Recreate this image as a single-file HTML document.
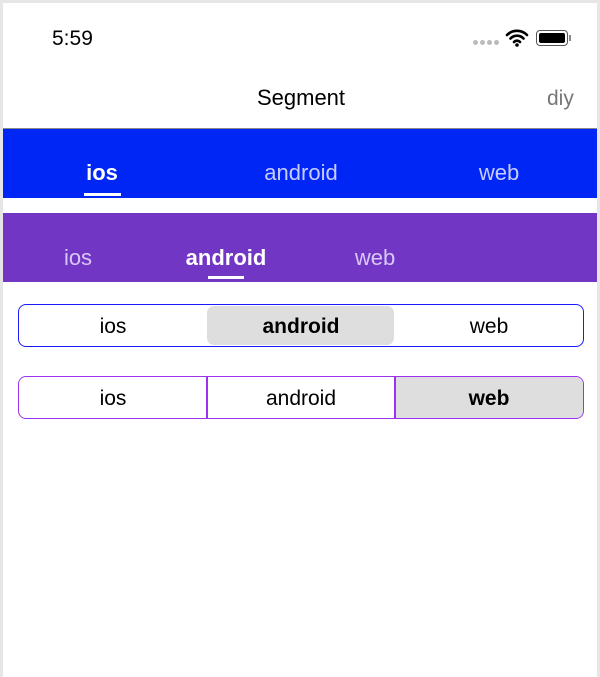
<!DOCTYPE html>
<html><head><style>
*{margin:0;padding:0;box-sizing:border-box}
body{width:600px;height:677px;background:#e6e6e6;font-family:"Liberation Sans",sans-serif;position:relative;overflow:hidden}
.page{position:absolute;left:3px;top:3px;width:594px;height:674px;background:#fff}
.abs{position:absolute}
.t{position:absolute;transform:translateX(-50%);white-space:nowrap}
</style></head><body>
<div class="page"></div>
<div class="abs" style="left:52px;top:27px;font-size:21px;color:#000">5:59</div>
<div class="abs" style="left:473px;top:40px;display:flex;gap:2px"><span style="width:5px;height:5px;border-radius:50%;background:#bbb"></span><span style="width:5px;height:5px;border-radius:50%;background:#bbb"></span><span style="width:5px;height:5px;border-radius:50%;background:#bbb"></span><span style="width:5px;height:5px;border-radius:50%;background:#bbb"></span></div>
<svg class="abs" style="left:505px;top:28px" width="24" height="20" viewBox="0 0 24 20"><path d="M2 7a14 14 0 0 1 20 0M5.5 10.5a9 9 0 0 1 13 0M9 14a4 4 0 0 1 6 0" stroke="#000" stroke-width="2.6" fill="none" stroke-linecap="round"/><circle cx="12" cy="17" r="1.8"/></svg>
<div class="abs" style="left:536px;top:30px;width:32px;height:16px;border:1.5px solid #555;border-radius:4px;padding:2px"><div style="width:100%;height:100%;background:#000;border-radius:2px"></div></div>
<div class="abs" style="left:569px;top:35px;width:2px;height:6px;background:#888"></div>
<div class="t" style="left:301px;top:85px;font-size:22px;color:#000">Segment</div>
<div class="abs" style="left:547px;top:87px;font-size:21px;color:#777">diy</div>
<div class="abs" style="left:3px;top:128px;width:594px;height:70px;background:#0026f5;border-top:1px solid #888"></div>
<div class="t" style="left:102px;top:160px;font-size:22px;font-weight:bold;color:#fff">ios</div>
<div class="t" style="left:301px;top:160px;font-size:22px;color:#c8ccff">android</div>
<div class="t" style="left:499px;top:160px;font-size:22px;color:#c8ccff">web</div>
<div class="abs" style="left:84px;top:193px;width:37px;height:3px;background:#fff"></div>
<div class="abs" style="left:3px;top:213px;width:594px;height:69px;background:#7236c4"></div>
<div class="t" style="left:78px;top:245px;font-size:22px;color:#d9c8f5">ios</div>
<div class="t" style="left:226px;top:245px;font-size:22px;font-weight:bold;color:#fff">android</div>
<div class="t" style="left:375px;top:245px;font-size:22px;color:#d9c8f5">web</div>
<div class="abs" style="left:208px;top:276px;width:36px;height:3px;background:#fff"></div>
<div class="abs" style="left:18px;top:304px;width:566px;height:43px;border:1.5px solid #1a1aff;border-radius:8px"></div>
<div class="abs" style="left:207px;top:306px;width:187px;height:39px;background:#dedede;border-radius:7px"></div>
<div class="t" style="left:113px;top:315px;font-size:21px;color:#000">ios</div>
<div class="t" style="left:301px;top:315px;font-size:21px;font-weight:bold;color:#000">android</div>
<div class="t" style="left:489px;top:315px;font-size:21px;color:#000">web</div>
<div class="abs" style="left:18px;top:376px;width:566px;height:43px;border:1.5px solid #9933ee;border-radius:8px;overflow:hidden">
<div class="abs" style="left:376px;top:0;width:190px;height:43px;background:#dedede"></div>
<div class="abs" style="left:187px;top:0;width:1.5px;height:43px;background:#9933ee"></div>
<div class="abs" style="left:375px;top:0;width:1.5px;height:43px;background:#9933ee"></div>
</div>
<div class="t" style="left:113px;top:387px;font-size:21px;color:#000">ios</div>
<div class="t" style="left:301px;top:387px;font-size:21px;color:#000">android</div>
<div class="t" style="left:489px;top:387px;font-size:21px;font-weight:bold;color:#000">web</div>
</body></html>
